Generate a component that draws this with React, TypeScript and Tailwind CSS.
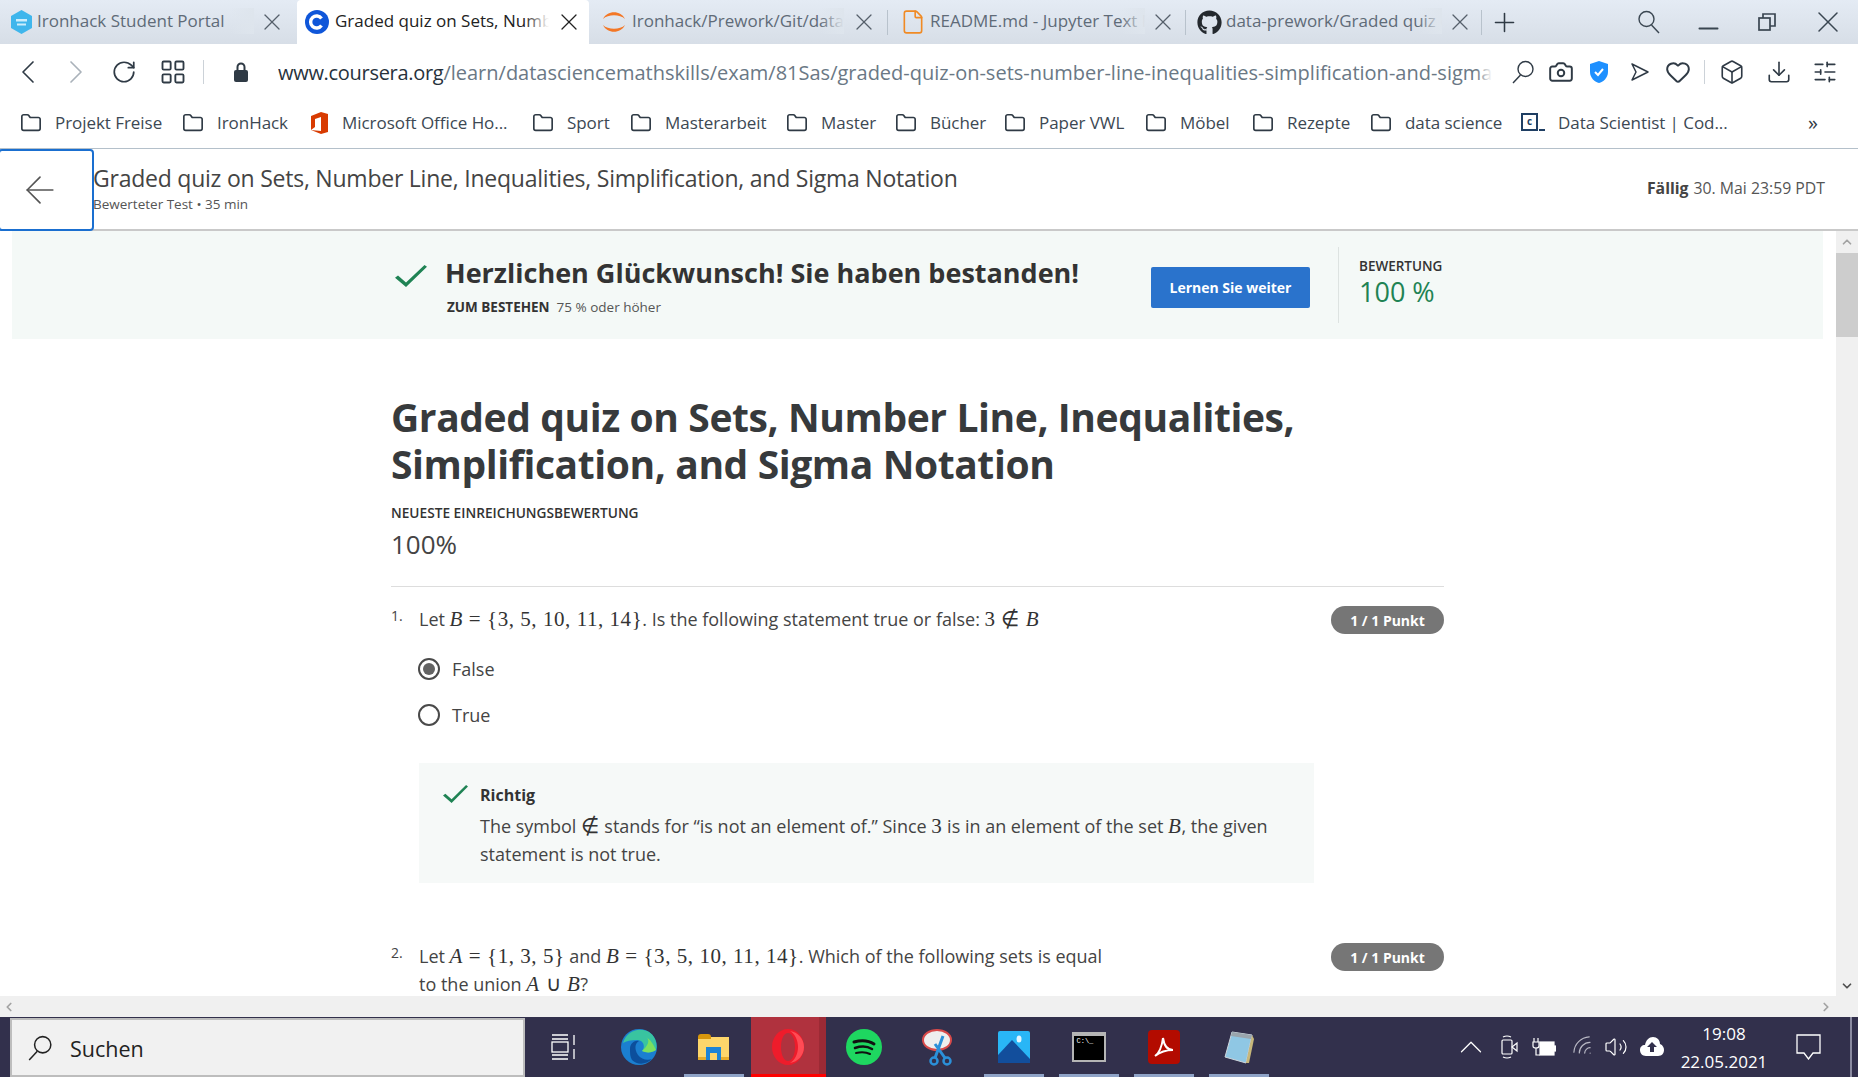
import type { ReactNode } from "react";
import { ArrowLeft, ChevronLeft, ChevronRight, ChevronUp, ChevronDown, RotateCw, LayoutGrid, Camera, Heart, Box, Download, SlidersHorizontal, Plus, X, Minus, Folder, File, Volume2, Wifi } from "lucide-react";
import { FaGithub } from "react-icons/fa";

const font = "font-['Open_Sans','Noto_Sans',sans-serif]";
const math = "font-['Liberation_Serif',serif]";

const tabs = [
  { title: "Ironhack Student Portal", w: "w-[297px]", box: "pl-[10px] gap-[4px]", mr: "mr-[11px]", icon: "iron" },
  { title: "Graded quiz on Sets, Number Line", w: "w-[292px]", box: "pl-[8px] gap-[6px]", mr: "mr-[6px]", icon: "coursera", active: true },
  { title: "Ironhack/Prework/Git/data-analysis", w: "w-[299px]", box: "pl-[13px] gap-[6px]", mr: "mr-[3px]", icon: "jupyter", sep: true },
  { title: "README.md - Jupyter Text Editor", w: "w-[298px]", box: "pl-[12px] gap-[4px]", mr: "mr-[4px]", icon: "file", sep: true },
  { title: "data-prework/Graded quiz on Sets", w: "w-[296px]", box: "pl-[11px] gap-[4px]", mr: "mr-[3px]", icon: "github", sep: true },
];

const TabIcon = ({ kind }: { kind: string }) => {
  if (kind === "iron")
    return (
      <svg width="23" height="24" viewBox="0 0 23 24" className="shrink-0">
        <path d="M11.5 0 L22 6 V18 L11.5 24 L1 18 V6 Z" fill="#3fb6ec" />
        <rect x="6" y="9" width="11" height="2.5" fill="#cdeefc" />
        <rect x="7" y="13.5" width="9" height="2" fill="#cdeefc" />
      </svg>
    );
  if (kind === "coursera")
    return (
      <svg width="24" height="24" viewBox="0 0 24 24" className="shrink-0">
        <circle cx="12" cy="12" r="12" fill="#0f56d9" />
        <path d="M16.5 8.5 A6 6 0 1 0 16.5 15.5" fill="none" stroke="#fff" strokeWidth="3.4" />
      </svg>
    );
  if (kind === "jupyter")
    return (
      <svg width="24" height="26" viewBox="0 0 24 26" className="shrink-0">
        <path d="M1 10 C5 1 19 1 23 10 C18 5 6 5 1 10 Z" fill="#f37726" />
        <path d="M1 16 C5 25 19 25 23 16 C18 21 6 21 1 16 Z" fill="#f37726" />
      </svg>
    );
  if (kind === "file") return <File size={26} strokeWidth={1.5} className="shrink-0 text-[#f08a24]" />;
  return <FaGithub size={25} className="shrink-0 text-[#24292e]" />;
};

// magnifier with the long handle the browser and the taskbar use
const Magnifier = ({ size, className }: { size: number; className: string }) => (
  <svg width={size} height={size} viewBox="0 0 24 24" fill="none" stroke="currentColor" strokeWidth="1.4" className={`shrink-0 ${className}`}>
    <circle cx="14.5" cy="9" r="7.5" />
    <path d="M9.5 15 L2 23" />
  </svg>
);

const bookmarks = [
  { label: "Projekt Freise", w: "w-[162px]" },
  { label: "IronHack", w: "w-[126px]" },
  { label: "Microsoft Office Ho...", w: "w-[224px]", icon: "office" },
  { label: "Sport", w: "w-[98px]" },
  { label: "Masterarbeit", w: "w-[156px]" },
  { label: "Master", w: "w-[109px]" },
  { label: "Bücher", w: "w-[109px]" },
  { label: "Paper VWL", w: "w-[141px]" },
  { label: "Möbel", w: "w-[107px]" },
  { label: "Rezepte", w: "w-[118px]" },
  { label: "data science", w: "w-[151px]" },
  { label: "Data Scientist | Cod...", w: "w-[287px]", icon: "dq" },
];

const Bookmark = ({ label, w, icon }: { label: string; w: string; icon?: string }) => (
  <div className={`flex items-center shrink-0 ${w}`}>
    {icon === "office" ? (
      <svg width="22" height="24" viewBox="0 0 22 24" className="shrink-0 mr-[12px]">
        <path d="M3 5 L13 1 L20 3 V21 L13 23 L3 19 L13 20 V6 L7 8 V16 L3 19 Z" fill="#d83b01" />
      </svg>
    ) : icon === "dq" ? (
      <div className="relative w-[24px] h-[20px] shrink-0 mr-[13px]">
        <div className="w-[17px] h-[18px] border-2 border-[#1f3f63] text-[#1f3f63] text-[10px] font-bold leading-[13px] text-center">c</div>
        <div className="absolute right-0 bottom-[2px] w-[6px] h-[2px] bg-[#1f3f63]" />
      </div>
    ) : (
      <Folder size={22} strokeWidth={1.8} className="shrink-0 mr-[13px] text-[#2f3a45]" />
    )}
    <span className="text-[17px] tracking-[-0.05px] text-[#3c4853] whitespace-nowrap">{label}</span>
  </div>
);

const Radio = ({ on }: { on?: boolean }) => (
  <div className="w-[22px] h-[22px] rounded-full border-2 border-[#4a4a4a] flex items-center justify-center shrink-0">
    {on && <div className="w-[12px] h-[12px] rounded-full bg-[#636363]" />}
  </div>
);

const M = ({ children }: { children: ReactNode }) => (
  <span className={`${math} text-[21px] tracking-[0.55px] text-[#333]`}>{children}</span>
);
const I = ({ children }: { children: ReactNode }) => <i>{children}</i>;

const Tick = ({ className }: { className: string }) => (
  <svg viewBox="0 0 32 24" preserveAspectRatio="none" className={`shrink-0 ${className}`}>
    <path d="M0 14 L3 11.5 L11 19 L29.5 0 L32 2 L11 24 Z" fill="#1f8354" />
  </svg>
);

const PointPill = () => (
  <div className="w-[113px] h-[28px] mt-px rounded-[14px] bg-[#767676] text-white text-[14px] font-bold flex items-center justify-center shrink-0">
    1 / 1 Punkt
  </div>
);

const Dock = ({ active, under, children }: { active?: boolean; under?: boolean; children: ReactNode }) => (
  <div className={`relative w-[75px] h-[60px] flex items-center justify-center shrink-0 ${active ? "bg-[#b0323e]" : ""}`}>
    {children}
    {under && <div className="absolute bottom-0 left-[8px] right-[7px] h-[3px] bg-[#8fa3c7]" />}
    {active && <div className="absolute top-0 bottom-0 right-0 w-[7px] bg-[#9c2a35]" />}
    {active && <div className="absolute bottom-0 left-0 right-0 h-[3px] bg-[#f00]" />}
  </div>
);

const App = () => {
  return (
    <div className={`${font} w-[1858px] h-[1077px] overflow-hidden flex flex-col bg-white`}>
      {/* browser tabs */}
      <div className="h-[44px] shrink-0 flex items-stretch bg-gradient-to-b from-[#e4ebf4] to-[#d7dee7]">
        {tabs.map((t) => (
          <div key={t.title} className={`flex items-center shrink-0 ${t.w} ${t.box} ${t.active ? "bg-white rounded-t-[4px]" : ""}`}>
            <TabIcon kind={t.icon} />
            <div className="relative flex-1 min-w-0 overflow-hidden -mt-[2px]">
              <div className={`whitespace-nowrap text-[17px] ${t.active ? "text-[#222]" : "text-[#5f6b78]"}`}>{t.title}</div>
              <div className={`absolute top-0 bottom-0 right-0 w-[24px] bg-gradient-to-r from-transparent ${t.active ? "to-white" : "to-[#dee5ed]"}`} />
            </div>
            <X size={28} strokeWidth={1.1} className={`shrink-0 ${t.mr} ${t.active ? "text-[#222]" : "text-[#56606b]"}`} />
            {t.sep && <div className="w-px h-[25px] bg-[#b8c2cc] shrink-0" />}
          </div>
        ))}
        <div className="flex items-center pl-[7px]">
          <Plus size={31} strokeWidth={1.2} className="text-[#2f3a45]" />
        </div>
        <div className="flex-1 flex items-center justify-end text-[#3a4651]">
          <Magnifier size={24} className="mr-[32px] -scale-x-100" />
          <Minus size={31} strokeWidth={1.5} className="mr-[34px] mt-[12px]" />
          <svg width="18" height="18" viewBox="0 0 18 18" className="mr-[34px]" fill="none" stroke="currentColor" strokeWidth="1.7">
            <rect x="1" y="5" width="11" height="12" />
            <path d="M5 5 V1 H17 V13 H12" />
          </svg>
          <X size={36} strokeWidth={1} className="mr-[12px]" />
        </div>
      </div>

      {/* address bar */}
      <div className="h-[56px] shrink-0 flex items-center text-[#2f3a45]">
        <ChevronLeft size={40} strokeWidth={1} className="ml-[8px]" />
        <ChevronRight size={40} strokeWidth={1} className="ml-[8px] text-[#aab2ba]" />
        <RotateCw size={26} strokeWidth={1.6} className="ml-[15px]" />
        <LayoutGrid size={28} strokeWidth={1.6} className="ml-[22px]" />
        <div className="w-px h-[24px] bg-[#ccd2d8] ml-[16px]" />
        <svg width="14" height="20" viewBox="0 0 14 20" className="ml-[30px] shrink-0">
          <path d="M3.5 9 V5 A3.5 3.5 0 0 1 10.5 5 V9" fill="none" stroke="#2f3a45" strokeWidth="2" />
          <rect x="0" y="8" width="14" height="12" rx="2" fill="#2f3a45" />
        </svg>
        <div className="relative ml-[30px] mt-[2px] w-[1214px] overflow-hidden whitespace-nowrap text-[20px] text-[#6a7885]">
          <span className="text-[#27323c] tracking-[-0.3px]">www.coursera.org</span>
          /learn/datasciencemathskills/exam/81Sas/graded-quiz-on-sets-number-line-inequalities-simplification-and-sigma-notation
          <div className="absolute top-0 bottom-0 right-0 w-[16px] bg-gradient-to-r from-transparent to-white" />
        </div>
        <Magnifier size={24} className="ml-[19px]" />
        <Camera size={26} strokeWidth={1.8} className="ml-[13px]" />
        <svg width="20" height="24" viewBox="0 0 20 24" className="ml-[15px] shrink-0">
          <path d="M10 1 L19 4 V12 C19 18 14 22 10 23 C6 22 1 18 1 12 V4 Z" fill="#1e90ff" />
          <path d="M6 12 L9 15 L14 9" fill="none" stroke="#fff" strokeWidth="2" />
        </svg>
        <svg width="20" height="20" viewBox="0 0 20 20" fill="none" stroke="currentColor" strokeWidth="1.5" className="ml-[21px] shrink-0">
          <path d="M2 2 L18 10 L2 18 L6 10 Z" strokeLinejoin="round" />
        </svg>
        <Heart size={26} strokeWidth={1.8} className="ml-[15px]" />
        <div className="w-px h-[24px] bg-[#ccd2d8] ml-[13px]" />
        <Box size={26} strokeWidth={1.5} className="ml-[14px]" />
        <Download size={26} strokeWidth={1.5} className="ml-[21px]" />
        <SlidersHorizontal size={26} strokeWidth={1.5} className="ml-[20px]" />
      </div>

      {/* bookmarks */}
      <div className="h-[49px] shrink-0 flex items-center pl-[20px] pb-[3px] border-b border-[#b4c0ca]">
        {bookmarks.map((b) => (
          <Bookmark key={b.label} {...b} />
        ))}
        <span className="text-[20px] text-[#2f3a45]">»</span>
      </div>

      {/* coursera header */}
      <div className="h-[82px] shrink-0 flex items-stretch border-b-2 border-[#c9c9c9]">
        <div className="w-[96px] h-[82px] -ml-[2px] shrink-0 border-2 border-[#1a6fd0] rounded-[4px] flex items-center pl-[18px]">
          <ArrowLeft size={44} strokeWidth={0.9} className="text-[#555]" />
        </div>
        <div className="flex-1 pt-[13px] -ml-px">
          <div className="text-[23px] tracking-[-0.23px] leading-[32px] text-[#444]">
            Graded quiz on Sets, Number Line, Inequalities, Simplification, and Sigma Notation
          </div>
          <div className="text-[13.5px] leading-[18px] text-[#555] mt-[1px]">Bewerteter Test • 35 min</div>
        </div>
        <div className="flex items-center pr-[33px] text-[15.8px] text-[#555]">
          <b className="text-[#444] mr-[5px]">Fällig</b> 30. Mai 23:59 PDT
        </div>
      </div>

      {/* page + scrollbars */}
      <div className="flex-1 min-h-0 flex">
        <div className="flex-1 min-w-0 flex flex-col">
          <div className="flex-1 min-h-0 overflow-hidden pl-[12px] pr-[13px]">
            <div className="h-[108px] bg-[#f4f9f7] flex items-stretch pl-[383px]">
              <Tick className="w-[32px] h-[22px] mt-[34px]" />
              <div className="ml-[18px] w-[706px] shrink-0">
                <div className="text-[27px] leading-[38px] font-bold text-[#333] mt-[23px]">Herzlichen Glückwunsch! Sie haben bestanden!</div>
                <div className="text-[13.5px] leading-[20px] text-[#555] mt-[5px] ml-[2px]">
                  <b className="text-[#333] mr-[7px]">ZUM BESTEHEN</b>75 % oder höher
                </div>
              </div>
              <div className="mt-[36px] w-[159px] h-[41px] shrink-0 bg-[#2a73cc] rounded-[2px] text-white text-[14px] font-bold flex items-center justify-center">
                Lernen Sie weiter
              </div>
              <div className="ml-[28px] mt-[16px] mb-[16px] w-px bg-[#dde3e1]" />
              <div className="pl-[20px] pt-[26px]">
                <div className="text-[13.5px] leading-[18px] font-semibold text-[#333]">BEWERTUNG</div>
                <div className="text-[27px] leading-[34px] text-[#1f8354]">100 %</div>
              </div>
            </div>

            <div className="w-[1053px] ml-[379px]">
              <h1 className="text-[39px] tracking-[-0.4px] leading-[47px] font-bold text-[#373a3c] mt-[54px]">
                Graded quiz on Sets, Number Line, Inequalities, Simplification, and Sigma Notation
              </h1>
              <div className="text-[13.7px] leading-[18px] font-semibold text-[#333] mt-[17px]">NEUESTE EINREICHUNGSBEWERTUNG</div>
              <div className="text-[26px] leading-[36px] text-[#444] mt-[4px] pb-[24px] border-b border-[#ddd]">100%</div>

              <div className="flex mt-[18px]">
                <div className="w-[28px] shrink-0 text-[14px] leading-[22px] text-[#444]">1.</div>
                <div className="flex-1 text-[18px] leading-[28px] text-[#444]">
                  Let <M><I>B</I> = {"{"}3, 5, 10, 11, 14{"}"}</M>. Is the following statement true or false: <M>3 ∉ <I>B</I></M>
                </div>
                <PointPill />
              </div>
              <div className="ml-[27px] mt-[23px] flex items-center gap-[12px] h-[24px] text-[18px] text-[#444]"><Radio on />False</div>
              <div className="ml-[27px] mt-[22px] flex items-center gap-[12px] h-[24px] text-[18px] text-[#444]"><Radio />True</div>
              <div className="ml-[28px] mt-[36px] w-[895px] h-[120px] bg-[#f6f9f8] flex pl-[24px] pt-[22px]">
                <Tick className="w-[25px] h-[18px]" />
                <div className="ml-[12px] text-[#444]">
                  <div className="text-[16px] leading-[20px] font-bold text-[#333]">Richtig</div>
                  <div className="text-[18px] leading-[28px] mt-[7px] whitespace-nowrap">
                    The symbol <M>∉</M> stands for “is not an element of.” Since <M>3</M> is in an element of the set <M><I>B</I></M>, the given
                    <br />
                    statement is not true.
                  </div>
                </div>
              </div>
              <div className="flex mt-[59px]">
                <div className="w-[28px] shrink-0 text-[14px] leading-[22px] text-[#444]">2.</div>
                <div className="flex-1 text-[18px] leading-[28px] text-[#444] whitespace-nowrap">
                  Let <M><I>A</I> = {"{"}1, 3, 5{"}"}</M> and <M><I>B</I> = {"{"}3, 5, 10, 11, 14{"}"}</M>. Which of the following sets is equal
                  <br />
                  to the union <M><I>A</I> ∪ <I>B</I></M>?
                </div>
                <PointPill />
              </div>
            </div>
          </div>
          <div className="h-[21px] shrink-0 bg-[#f0f0f0] flex items-center justify-between px-[2px] text-[#a3a3a3]">
            <ChevronLeft size={14} strokeWidth={3} />
            <ChevronRight size={14} strokeWidth={3} className="mr-px" />
          </div>
        </div>
        <div className="w-[22px] shrink-0 bg-[#f0f0f0] flex flex-col items-center text-[#a3a3a3]">
          <ChevronUp size={14} strokeWidth={3} className="mt-[4px]" />
          <div className="w-full h-[84px] bg-[#cdcdcd] mt-[4px]" />
          <div className="flex-1" />
          <ChevronDown size={14} strokeWidth={3} className="mb-[24px] text-[#505050]" />
        </div>
      </div>

      {/* windows taskbar */}
      <div className="h-[60px] shrink-0 bg-[#32304c] flex items-center text-white">
        <div className="ml-[10px] w-[515px] h-[59px] mt-px bg-[#f1f1f1] border-2 border-[#bdbdbd] flex items-center shrink-0 text-[#222]">
          <Magnifier size={26} className="ml-[15px]" />
          <span className="ml-[17px] mt-[4px] text-[21.5px]">Suchen</span>
        </div>
        <div className="w-[76px] flex justify-center shrink-0">
          <svg width="25" height="26" viewBox="0 0 25 26" fill="none" stroke="#fff" strokeWidth="1.3">
            <path d="M1 1 H17 M1 5 H17 M1 21 H17 M1 25 H17 M23 1 V11 M23 15 V25" />
            <rect x="1" y="8" width="16" height="10" />
          </svg>
        </div>
        <Dock>
          <svg width="36" height="36" viewBox="0 0 36 36">
            <circle cx="18" cy="18" r="18" fill="#1b7fd0" />
            <path d="M2 14 C5 3 16 -2 26 2 C33 5 37 13 35 21 C31 24 25 24 21 22 C25 17 22 11 16 11 C10 11 5 12 2 14 Z" fill="#39c4a0" />
            <path d="M35 21 C32 15 30 11 25 8 C30 11 26 18 21 22 C25 24 31 24 35 21 Z" fill="#7ce05f" />
            <path d="M9 20 C9 14 14 11 18 12 C14 14 13 20 17 26 C20 30 26 32 31 30 C25 36 16 36 11 31 C9 28 9 24 9 20 Z" fill="#0c4f9c" />
          </svg>
        </Dock>
        <Dock under>
          <svg width="31" height="26" viewBox="0 0 31 26">
            <rect x="0" y="3" width="31" height="22" fill="#fdd66b" />
            <path d="M0 3 Q0 0 3 0 H10 Q13 0 13 3 V5 H0 Z" fill="#d8960c" />
            <rect x="0" y="23" width="31" height="3" fill="#e8ad2a" />
            <rect x="8" y="13" width="15" height="13" fill="#1d84d6" />
            <rect x="12" y="19" width="7" height="7" fill="#fdd66b" />
          </svg>
        </Dock>
        <Dock active>
          <svg width="32" height="36" viewBox="0 0 32 36" className="relative z-10 -ml-[2px]">
            <path fillRule="evenodd" d="M16 0 C25 0 32 8 32 18 C32 28 25 36 16 36 C7 36 0 28 0 18 C0 8 7 0 16 0 Z M16 4 C12 4 9 10 9 18 C9 26 12 32 16 32 C20 32 23 26 23 18 C23 10 20 4 16 4 Z" fill="#ee1c2b" />
            <path fillRule="evenodd" d="M18 2 C26 3 32 10 32 18 C32 26 26 33 18 34 C23 31 26 25 26 18 C26 11 23 5 18 2 Z" fill="#ff4b55" />
          </svg>
        </Dock>
        <Dock>
          <svg width="36" height="36" viewBox="0 0 36 36" fill="none">
            <circle cx="18" cy="18" r="18" fill="#1ed760" />
            <path d="M8 13 C15 11 22 11 28 15" stroke="#111" strokeWidth="3" strokeLinecap="round" />
            <path d="M9 19 C15 17 21 17 26 20" stroke="#111" strokeWidth="2.5" strokeLinecap="round" />
            <path d="M10 24 C15 23 20 23 24 25" stroke="#111" strokeWidth="2" strokeLinecap="round" />
          </svg>
        </Dock>
        <Dock>
          <svg width="36" height="38" viewBox="0 0 36 38" fill="none">
            <ellipse cx="16" cy="12" rx="14" ry="10" fill="#eee" stroke="#d84a4a" strokeWidth="2" />
            <path d="M14 16 L24 30 M22 8 L14 30" stroke="#2b90d9" strokeWidth="3" />
            <circle cx="26" cy="33" r="3.5" stroke="#2b90d9" strokeWidth="2.5" />
            <circle cx="13" cy="33" r="3.5" stroke="#2b90d9" strokeWidth="2.5" />
          </svg>
        </Dock>
        <Dock under>
          <svg width="32" height="32" viewBox="0 0 32 32">
            <rect width="32" height="32" rx="2" fill="#29b6f6" />
            <path d="M0 32 V24 L14 9 L32 28 V32 Z" fill="#124e9c" />
            <ellipse cx="21" cy="8" rx="2.5" ry="3.5" fill="#e3f6ff" />
          </svg>
        </Dock>
        <Dock under>
          <div className="w-[34px] h-[30px] bg-black border-2 border-[#b5b5b5] border-t-[4px] text-[7px] leading-[10px] pl-[3px] font-['Liberation_Mono',monospace]">C:\_</div>
        </Dock>
        <Dock under>
          <div className="w-[32px] h-[34px] rounded-[4px] bg-[#b30b00] flex items-center justify-center">
            <svg width="22" height="24" viewBox="0 0 22 24" fill="none" stroke="#fff" strokeWidth="2">
              <path d="M2 21 C6 18 9 11 10 3 C11 10 14 15 20 15 C14 15 7 17 2 21 Z" />
            </svg>
          </div>
        </Dock>
        <Dock under>
          <svg width="34" height="34" viewBox="0 0 34 34">
            <path d="M10 2 L30 5 L24 33 L3 27 Z" fill="#8fc7e4" stroke="#cfd6dc" />
            <path d="M24 33 L30 5 L32 9 L27 33 Z" fill="#c7b77a" />
            <path d="M10 2 L30 5 L29 9 L9 6 Z" fill="#9aa5ad" />
          </svg>
        </Dock>
        <div className="flex-1" />
        <ChevronUp size={38} strokeWidth={0.8} />
        <svg width="17" height="24" viewBox="0 0 17 24" fill="none" stroke="#fff" strokeWidth="1.2" className="ml-[11px] shrink-0">
          <rect x="1" y="5" width="10" height="14" rx="1" />
          <path d="M11 12 L16 8 V16 Z M2 2 Q6 0 10 2 M2 22 Q6 24 10 22" />
        </svg>
        <svg width="24" height="24" viewBox="0 0 24 24" fill="none" stroke="#fff" strokeWidth="1.2" className="ml-[14px] shrink-0">
          <path d="M2 3 V7 M6 3 V7 M1 7 H7 V11 Q7 13 4 13 Q1 13 1 11 Z M4 13 V20 H8" />
          <rect x="8" y="7" width="14" height="13" fill="#fff" />
          <rect x="22" y="11" width="2" height="5" fill="#fff" />
        </svg>
        <Wifi size={26} strokeWidth={1.1} className="ml-[15px] -rotate-45 text-[#b8b8c4]" />
        <Volume2 size={24} strokeWidth={1.2} className="ml-[7px]" />
        <svg width="24" height="20" viewBox="0 0 24 20" className="ml-[12px] shrink-0">
          <path d="M6 19 C2 19 0 16 0 13 C0 10 2 8 5 8 C6 3 9 0 13 0 C17 0 20 3 20 7 C23 8 24 11 24 13 C24 16 22 19 18 19 Z" fill="#fff" />
          <path d="M12 5 L7 10 H10 V15 H14 V10 H17 Z" fill="#32304c" />
        </svg>
        <div className="w-[100px] ml-[10px] mt-[2px] text-center text-[17px] leading-[28px] shrink-0">
          <div>19:08</div>
          <div>22.05.2021</div>
        </div>
        <svg width="25" height="26" viewBox="0 0 25 26" fill="none" stroke="#fff" strokeWidth="1.3" className="ml-[22px] shrink-0">
          <path d="M1 1 H24 V19 H17 L12.5 25 L8 19 H1 Z" />
        </svg>
        <div className="ml-[29px] mr-[6px] w-[2px] h-full bg-[#8a8aa0] shrink-0" />
      </div>
    </div>
  );
};

export default App;
